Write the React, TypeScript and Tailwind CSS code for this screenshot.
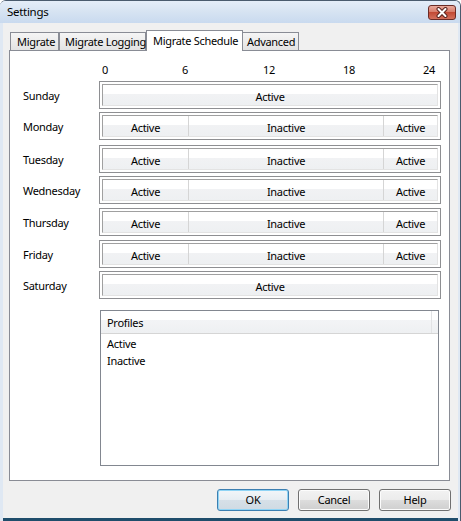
import React from 'react';

type Seg = { label: string; w?: string };

const days: { name: string; mt: string; segs: Seg[] }[] = [
  { name: 'Sunday', mt: 'mt-[4px]', segs: [{ label: 'Active' }] },
  { name: 'Monday', mt: 'mt-[3px]', segs: [{ label: 'Active', w: 'w-[86px]' }, { label: 'Inactive', w: 'w-[195px]' }, { label: 'Active' }] },
  { name: 'Tuesday', mt: 'mt-[5px]', segs: [{ label: 'Active', w: 'w-[86px]' }, { label: 'Inactive', w: 'w-[195px]' }, { label: 'Active' }] },
  { name: 'Wednesday', mt: 'mt-[3px]', segs: [{ label: 'Active', w: 'w-[86px]' }, { label: 'Inactive', w: 'w-[195px]' }, { label: 'Active' }] },
  { name: 'Thursday', mt: 'mt-[4px]', segs: [{ label: 'Active', w: 'w-[86px]' }, { label: 'Inactive', w: 'w-[195px]' }, { label: 'Active' }] },
  { name: 'Friday', mt: 'mt-[4px]', segs: [{ label: 'Active', w: 'w-[86px]' }, { label: 'Inactive', w: 'w-[195px]' }, { label: 'Active' }] },
  { name: 'Saturday', mt: 'mt-[3px]', segs: [{ label: 'Active' }] },
];

const hours = [
  { h: '0', ml: 'ml-[85px]' },
  { h: '6', ml: 'ml-[60px]' },
  { h: '12', ml: 'ml-[64px]' },
  { h: '18', ml: 'ml-[60px]' },
  { h: '24', ml: 'ml-[60px]' },
];

const segBg =
  'bg-[linear-gradient(to_bottom,#ffffff_0%,#ffffff_45%,#f1f2f4_45%,#eef0f2_100%)]';

const CloseButton = () => (
  <div className="w-[28px] h-[15px] mt-[1px] mr-[4px] rounded-[3px] border border-[#6b2b25] bg-[linear-gradient(to_bottom,#e9a99c_0%,#d87d6b_45%,#c24a35_50%,#d4705c_100%)] flex items-center justify-center">
    <svg width="16" height="11" viewBox="0 0 16 11">
      <path d="M4.5 2 L11.5 9 M11.5 2 L4.5 9" stroke="#5b2520" strokeWidth="4" strokeLinecap="round" />
      <path d="M4.5 2 L11.5 9 M11.5 2 L4.5 9" stroke="#ffffff" strokeWidth="2" strokeLinecap="round" />
    </svg>
  </div>
);

const Button = ({ label, primary }: { label: string; primary?: boolean }) => (
  <div
    className={
      primary
        ? 'w-[72px] h-[22px] rounded-[3px] border border-[#3c7fb1] shadow-[inset_0_0_0_1px_#8fd4f5] bg-[linear-gradient(to_bottom,#f2f6f9_0%,#e6edf2_50%,#d6e0e8_50%,#cfdae3_100%)] flex items-center justify-center text-black'
        : 'w-[72px] h-[22px] rounded-[3px] border border-[#707070] shadow-[inset_0_0_0_1px_#fcfcfc] bg-[linear-gradient(to_bottom,#f2f2f2_0%,#ebebeb_50%,#dddddd_50%,#cfcfcf_100%)] flex items-center justify-center text-black'
    }
  >
    {label}
  </div>
);

export default function App() {
  return (
    <div className="w-[461px] h-[521px] flex flex-col bg-[#dfe8f3] rounded-t-[6px] border-t border-r border-[#4a5b6e] font-['Segoe_UI','Noto_Sans',sans-serif] text-[11px] tracking-[-0.3px] text-black overflow-hidden">
      {/* title bar */}
      <div className="h-[22px] flex items-center pl-[7px] bg-[linear-gradient(to_bottom,#e4edf8_0%,#d6e3f2_50%,#c9daef_100%)]">
        <span className="text-[11.5px]">Settings</span>
        <div className="ml-auto">
          <CloseButton />
        </div>
      </div>

      {/* client */}
      <div className="flex-1 flex flex-col bg-[#f0f0f0] ml-[3px] mr-[2px] mb-[3px] border-b border-[#f0f0f0] shadow-[0_3px_0_#1f4d6b]">
        {/* tabs */}
        <div className="flex items-end h-[27px] ml-[7px]">
          <div className="w-[49px] h-[18px] border border-b-0 border-[#898c95] bg-[linear-gradient(to_bottom,#f5f5f5,#e3e3e3)] pl-[6px] leading-[18px] whitespace-nowrap">
            Migrate
          </div>
          <div className="w-[87px] h-[18px] border border-b-0 border-[#898c95] bg-[linear-gradient(to_bottom,#f5f5f5,#e3e3e3)] pl-[5px] leading-[18px] whitespace-nowrap">
            Migrate Logging
          </div>
          <div className="relative z-10 -mb-px w-[97px] h-[21px] border border-b-0 border-[#898c95] bg-white pl-[6px] leading-[19px] whitespace-nowrap">
            Migrate Schedule
          </div>
          <div className="w-[56px] h-[18px] border border-l-0 border-b-0 border-[#898c95] bg-[linear-gradient(to_bottom,#f5f5f5,#e3e3e3)] pl-[4px] leading-[18px] whitespace-nowrap">
            Advanced
          </div>
        </div>

        {/* panel */}
        <div className="ml-[6px] w-[441px] h-[431px] border border-[#898c95] bg-white flex flex-col">
          <div className="flex mt-[12px] h-[14px] leading-[14px]">
            {hours.map(x => (
              <div key={x.h} className={`${x.ml} w-[20px] text-center`}>
                {x.h}
              </div>
            ))}
          </div>

          {days.map(d => (
            <div key={d.name} className={`${d.mt} flex items-center h-[28px]`}>
              <div className="w-[89px] pl-[13px] pt-[3px]">{d.name}</div>
              <div className="w-[342px] h-[28px] border border-[#8e8f92] bg-white p-[2px]">
                <div className="h-full flex border border-t-[#a0a0a0] border-l-[#a0a0a0] border-r-[#e3e3e3] border-b-[#e3e3e3] shadow-[inset_1px_1px_0_#696969]">
                  {d.segs.map((s, i) => (
                    <div
                      key={i}
                      className={`${s.w ?? 'flex-1'} ${segBg} ${
                        i < d.segs.length - 1 ? 'border-r border-[#d5d5d5]' : ''
                      } flex items-center justify-center pt-[4px]`}
                    >
                      {s.label}
                    </div>
                  ))}
                </div>
              </div>
            </div>
          ))}

          {/* profiles */}
          <div className="ml-[90px] mt-[11px] w-[339px] h-[156px] border border-[#828790] flex flex-col">
            <div className="h-[23px] flex border-b border-[#d5d5d5] bg-[linear-gradient(to_bottom,#ffffff_0%,#ffffff_40%,#f3f4f6_40%,#eef0f2_100%)]">
              <div className="w-[331px] border-r border-[#e2e3e5] pl-[6px] leading-[23px]">Profiles</div>
              <div className="flex-1" />
            </div>
            <div className="pl-[6px] pt-[1px] leading-[17px]">
              <div>Active</div>
              <div>Inactive</div>
            </div>
          </div>
        </div>

        {/* buttons */}
        <div className="flex mt-[8px] ml-[214px] gap-[9px]">
          <Button label="OK" primary />
          <Button label="Cancel" />
          <Button label="Help" />
        </div>
      </div>
    </div>
  );
}
